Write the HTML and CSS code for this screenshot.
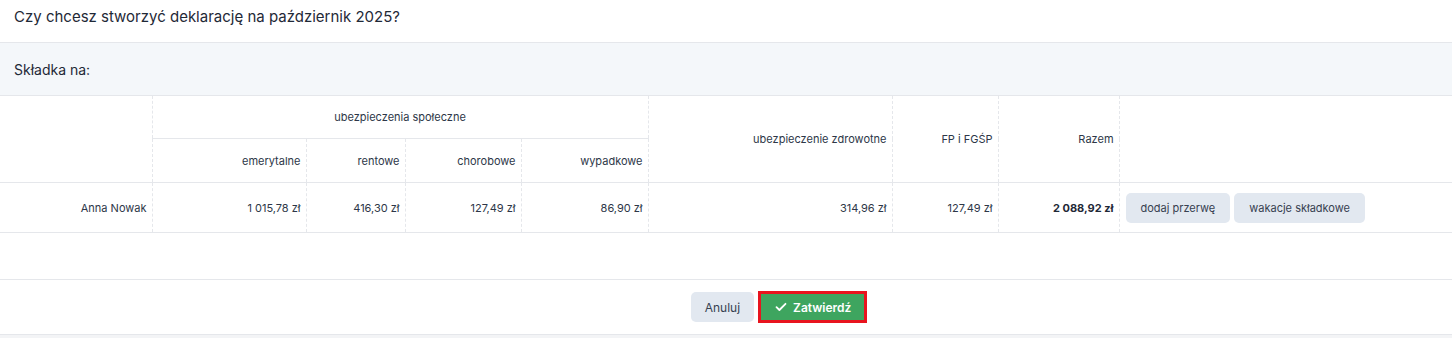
FILE: index.html
```html
<!DOCTYPE html>
<html lang="pl">

<head>
    <meta charset="UTF-8">
    <meta name="viewport" content="width=device-width, initial-scale=1.0">
    <title>Deklaracja</title>
    <link rel="stylesheet" href="styles.css">
</head>

<body>
    <div class="modal">
        <div class="modal-header">
            <h2>Czy chcesz stworzyć deklarację na październik 2025?</h2>
        </div>
        <div class="section-bar">Składka na:</div>
        <table class="contrib">
            <colgroup>
                <col style="width: 152px">
                <col style="width: 154px">
                <col style="width: 99px">
                <col style="width: 116px">
                <col style="width: 127px">
                <col style="width: 244px">
                <col style="width: 106px">
                <col style="width: 121px">
                <col>
            </colgroup>
            <thead>
                <tr class="head-top">
                    <th rowspan="2"></th>
                    <th colspan="4" class="group">ubezpieczenia społeczne</th>
                    <th rowspan="2">ubezpieczenie zdrowotne</th>
                    <th rowspan="2">FP i FGŚP</th>
                    <th rowspan="2">Razem</th>
                    <th rowspan="2" class="actions"></th>
                </tr>
                <tr class="head-sub">
                    <th>emerytalne</th>
                    <th>rentowe</th>
                    <th>chorobowe</th>
                    <th>wypadkowe</th>
                </tr>
            </thead>
            <tbody>
                <tr class="data-row">
                    <td>Anna Nowak</td>
                    <td>1 015,78 zł</td>
                    <td>416,30 zł</td>
                    <td>127,49 zł</td>
                    <td>86,90 zł</td>
                    <td>314,96 zł</td>
                    <td>127,49 zł</td>
                    <td class="total">2 088,92 zł</td>
                    <td class="actions">
                        <button class="btn-light">dodaj przerwę</button>
                        <button class="btn-light">wakacje składkowe</button>
                    </td>
                </tr>
            </tbody>
        </table>
        <div class="spacer"></div>
        <div class="modal-footer">
            <button class="btn-light btn-cancel">Anuluj</button>
            <span class="highlight">
                <button class="btn-confirm">
                    <svg width="12" height="10" viewBox="0 0 12 10">
                        <path d="M1.5 5.2 4.4 8 10.5 1.8" fill="none" stroke="#fff" stroke-width="1.8" stroke-linecap="round" stroke-linejoin="round"/>
                    </svg>
                    Zatwierdź
                </button>
            </span>
        </div>
    </div>
</body>

</html>
```

FILE: styles.css
```css
body {
    margin: 0;
    font-family: Inter, "Noto Sans", sans-serif;
    color: #1f2937;
    background-color: #f3f4f6;
}

.modal {
    background-color: #fff;
    border-bottom: 1px solid #e5e7eb;
}

.modal-header {
    height: 42px;
    padding: 0 14px;
    border-bottom: 1px solid #e5e7eb;
}

.modal-header h2 {
    margin: 0;
    padding-top: 6px;
    font-size: 15px;
    font-weight: 400;
    line-height: 22px;
    color: #1f2937;
}

.section-bar {
    height: 52px;
    padding: 0 14px;
    display: flex;
    align-items: center;
    background-color: #f4f7fa;
    border-bottom: 1px solid #e5e7eb;
    font-size: 14px;
    color: #1f2937;
}

.contrib {
    width: 100%;
    border-collapse: collapse;
    table-layout: fixed;
    font-size: 11px;
    color: #2d3748;
}

.contrib th,
.contrib td {
    padding: 0 5px;
    text-align: right;
    font-weight: 400;
    border-left: 1px dashed #e5e7eb;
}

.contrib th:first-child,
.contrib td:first-child {
    border-left: none;
}

.head-top th {
    height: 42px;
}

.head-top th.group {
    text-align: center;
    border-bottom: 1px solid #e5e7eb;
}

.head-sub th {
    height: 43px;
}

.head-sub th:first-child {
    border-left: 1px dashed #e5e7eb;
}

.contrib thead tr.head-sub {
    border-bottom: 1px solid #e5e7eb;
}

.data-row td {
    height: 49px;
    border-bottom: 1px solid #e5e7eb;
}

.contrib td.total {
    font-weight: 700;
    color: #1f2937;
}

.contrib td.actions {
    text-align: left;
    padding-left: 6px;
}

.btn-light {
    font-family: inherit;
    font-size: 11px;
    color: #374151;
    background-color: #e2e8f0;
    border: none;
    border-radius: 5px;
    height: 30px;
    padding: 0 15px;
    margin-right: 1px;
}

.spacer {
    height: 46px;
    border-bottom: 1px solid #e5e7eb;
}

.modal-footer {
    height: 54px;
    display: flex;
    align-items: center;
    justify-content: center;
    gap: 2px;
    padding-left: 106px;
}

.btn-cancel {
    font-size: 12px;
    padding: 0 14px;
}

.highlight {
    display: inline-flex;
    border: 3px solid #e8141e;
    margin-left: 1px;
}

.btn-confirm {
    display: flex;
    align-items: center;
    gap: 6px;
    height: 26px;
    padding: 0 13px 0 14px;
    font-family: inherit;
    font-size: 12px;
    font-weight: 600;
    color: #fff;
    background-color: #3ea55f;
    border: none;
}
```
